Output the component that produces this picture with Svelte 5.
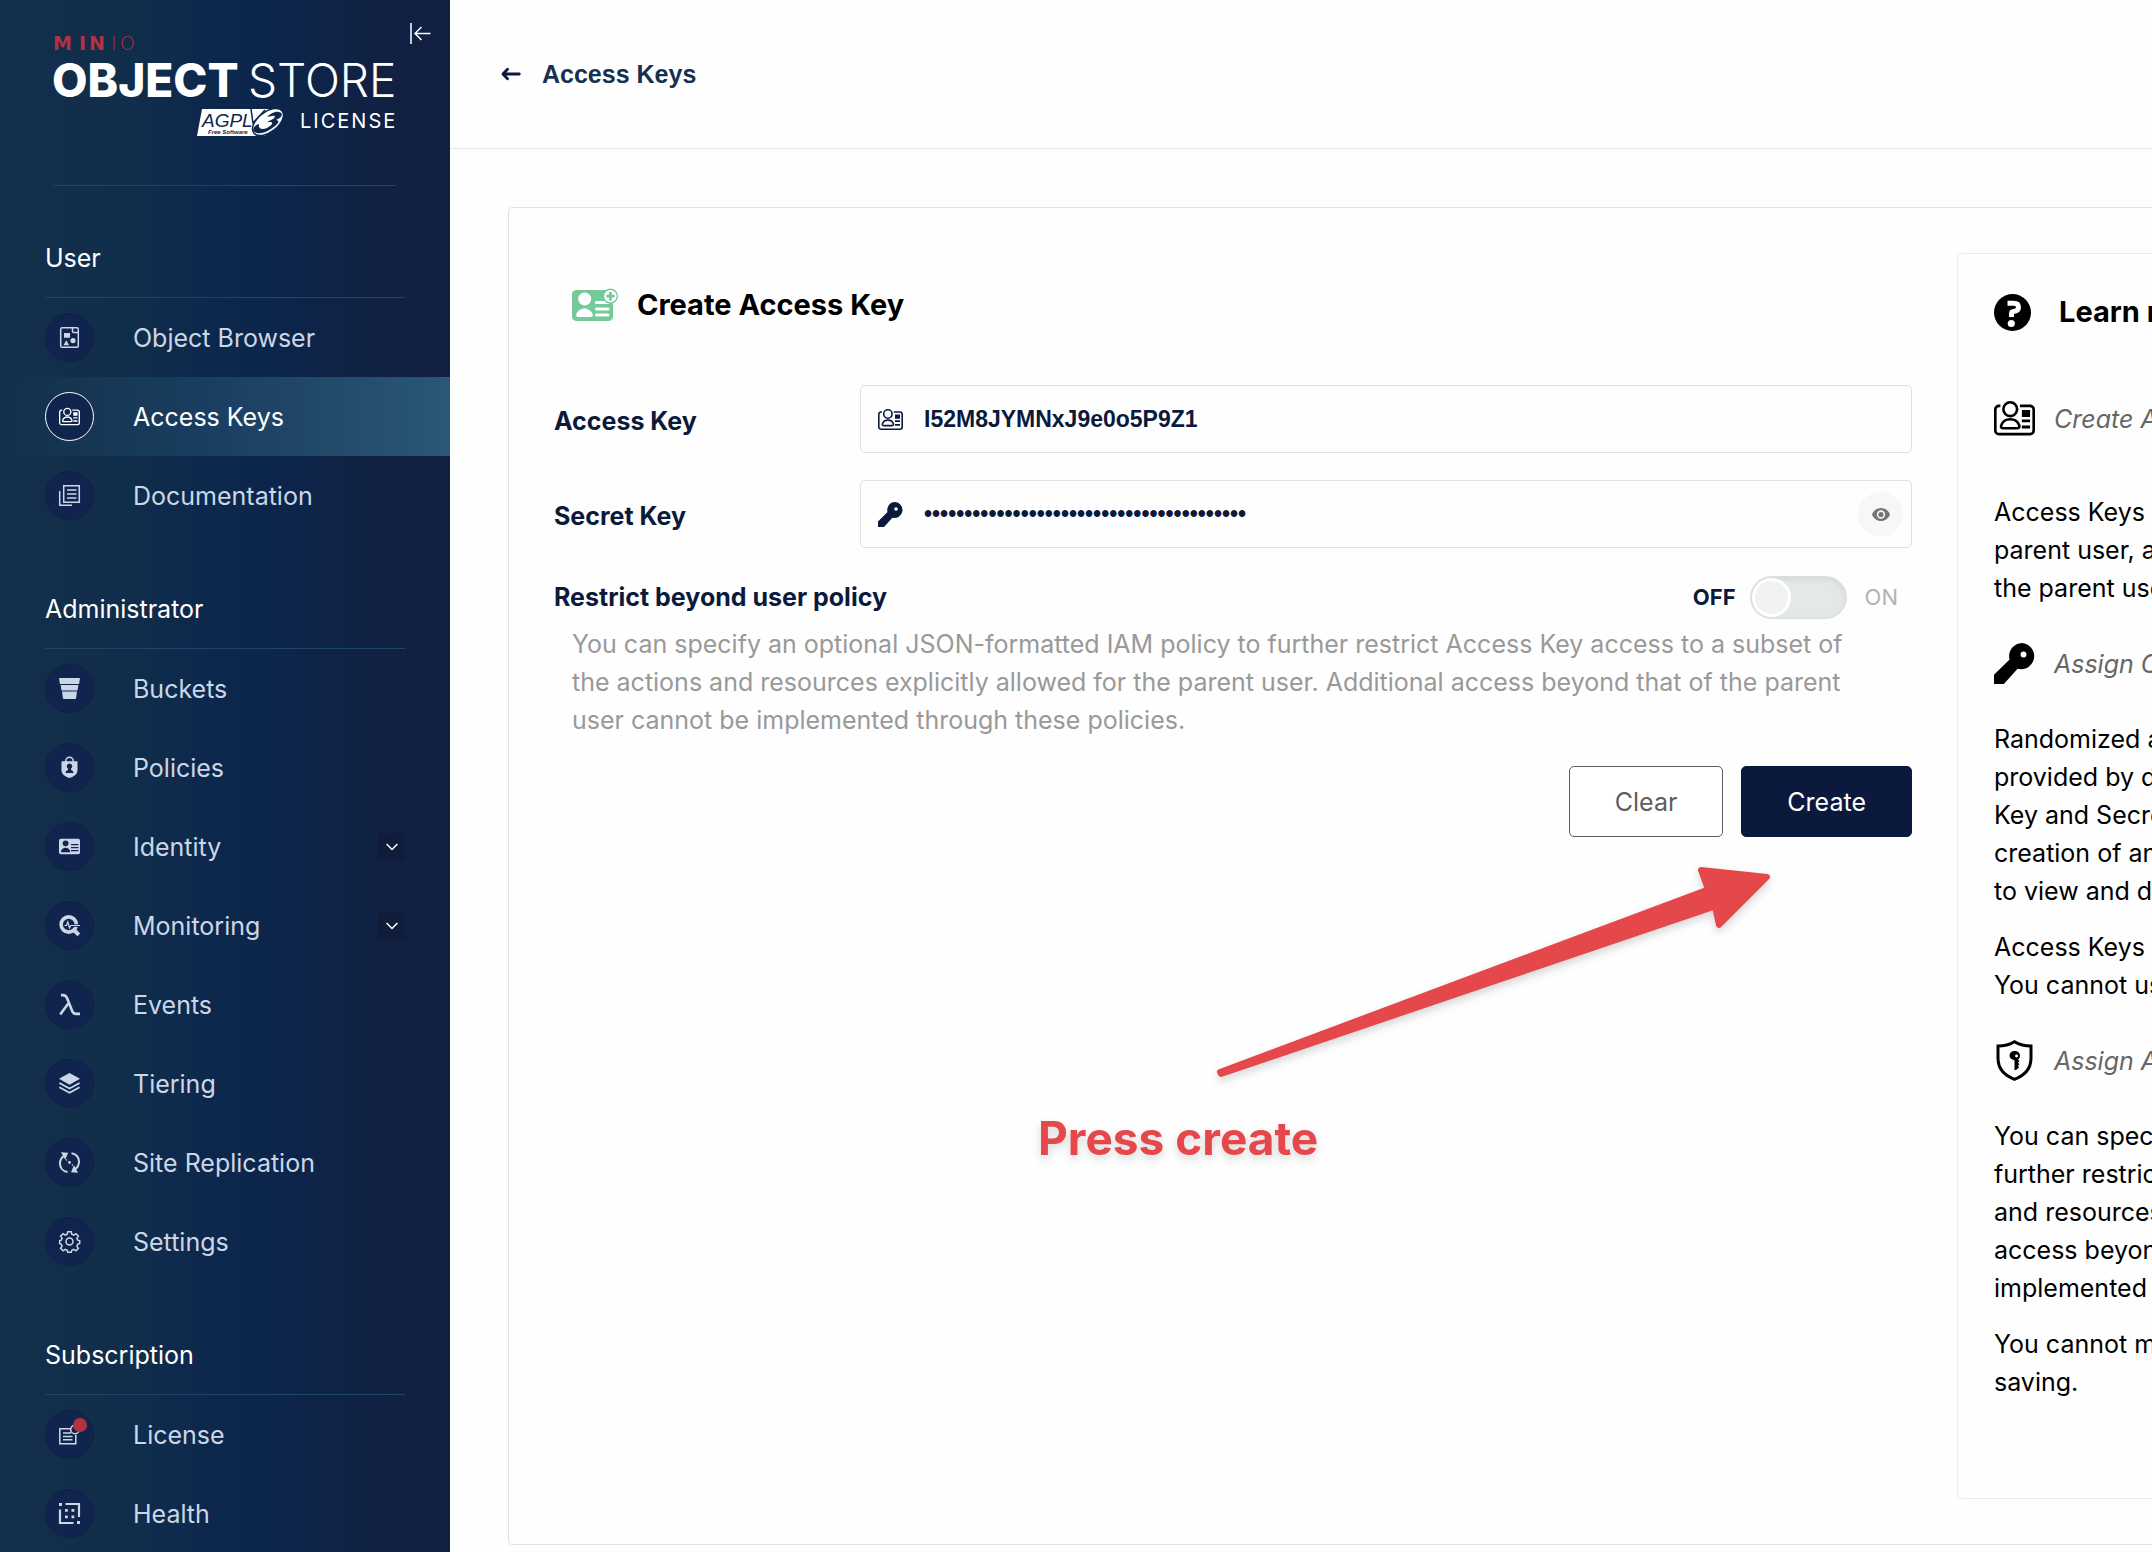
<script>
  let accessKey = $state('I52M8JYMNxJ9e0o5P9Z1');
  let secretKey = $state('q7Rk2ZpLw9XcVb4NtYhG6sDf8JmKaE3uQi5oPx1T');
  let reveal = $state(false);
  let restrict = $state(false);

  const sections = [
    {
      title: 'User',
      items: [
        { label: 'Object Browser', icon: 'browser' },
        { label: 'Access Keys', icon: 'card', active: true },
        { label: 'Documentation', icon: 'docs' }
      ]
    },
    {
      title: 'Administrator',
      items: [
        { label: 'Buckets', icon: 'bucket' },
        { label: 'Policies', icon: 'policy' },
        { label: 'Identity', icon: 'identity', expandable: true },
        { label: 'Monitoring', icon: 'monitor', expandable: true },
        { label: 'Events', icon: 'lambda' },
        { label: 'Tiering', icon: 'tiers' },
        { label: 'Site Replication', icon: 'replication' },
        { label: 'Settings', icon: 'gear' }
      ]
    },
    {
      title: 'Subscription',
      items: [
        { label: 'License', icon: 'license', badge: true },
        { label: 'Health', icon: 'health' }
      ]
    }
  ];

  const help = [
    {
      icon: 'card',
      title: 'Create Access Keys',
      first: true,
      paragraphs: [
        'Access Keys inherit the policies explicitly attached to the\nparent user, and all policies attached to each group in which\nthe parent user has membership.'
      ]
    },
    {
      icon: 'key',
      title: 'Assign Custom Credentials',
      paragraphs: [
        'Randomized access credentials are recommended, and\nprovided by default. You may use your own custom Access\nKey and Secret Key by replacing the default values. After\ncreation of any Access Key, you will be given the opportunity\nto view and download the account credentials.',
        'Access Keys support programmatic access by applications.\nYou cannot use a Access Key to log into the MinIO Console.'
      ]
    },
    {
      icon: 'shield',
      title: 'Assign Access Policies',
      paragraphs: [
        'You can specify an optional JSON-formatted IAM policy to\nfurther restrict Access Key access to a subset of the actions\nand resources explicitly allowed for the parent user. Additional\naccess beyond that of the parent user cannot be\nimplemented through these policies.',
        'You cannot modify the optional Access Key IAM policy after\nsaving.'
      ]
    }
  ];
</script>

{#snippet cardIcon(cls)}
  <svg class={cls} viewBox="0 0 25 21" fill="none" stroke="currentColor" stroke-width="1.6" aria-hidden="true">
    <path d="M3.9 3H3a2.2 2.2 0 0 0-2.2 2.2V18A2.2 2.2 0 0 0 3 20.2h19a2.2 2.2 0 0 0 2.2-2.2V5.2A2.2 2.2 0 0 0 22 3h-6.2" />
    <circle cx="9.9" cy="5" r="4.200" />
    <path d="M5.6 16.6c-1 0-1.600-.7-1.200-1.700.8-2.400 2.800-3.800 5.500-3.800s4.700 1.400 5.500 3.800c.3 1-.2 1.700-1.200 1.700z" />
    <path fill="currentColor" stroke="none" d="M17 5.500h5v4.200h-5zM17 11.300h5V13h-5zM17 15h5v1.700h-5z" />
  </svg>
{/snippet}

{#snippet keyIcon(cls)}
  <svg class={cls} viewBox="0 0 25 25" fill="currentColor" aria-hidden="true">
    <path fill-rule="evenodd" d="M17 0a8 8 0 1 1-2.600 15.700L6 25H0v-5.600l9.500-9.300A8 8 0 0 1 17 0zm1 5.200a1.800 1.800 0 1 0 0 3.600 1.800 1.800 0 0 0 0-3.600z" />
  </svg>
{/snippet}

{#snippet navIcon(name)}
  {#if name === 'card'}
    {@render cardIcon('glyph')}
  {:else}
    <svg class="glyph" viewBox="0 0 21 21" fill="none" stroke="currentColor" stroke-width="1.5" aria-hidden="true">
      {#if name === 'browser'}
        <rect x="1.700" y=".7" width="17.600" height="19.600" rx="1.500" />
        <path d="M13.500.7v3.800a1 1 0 0 0 1 1h4.800" />
        <g fill="currentColor" stroke="none">
          <path d="M5 6h6v4.800H5zM4.500 18.200l2.800-5 2.800 5z" />
          <circle cx="14" cy="13.600" r="2.600" />
        </g>
      {:else if name === 'docs'}
        <path d="M4.700.7h15.600v16.600H4.700zM.7 6v14.300H13M8 5h9.500M8 9h9.500M8 13h9.500" />
      {:else if name === 'bucket'}
        <path fill="currentColor" stroke="none" d="M0 0h21l-.9 5.900H.9zM1.600 6.900h17.800l-.9 5.700h-16zM3 13.600h15l-.9 6.600a1 1 0 0 1-1 .8H4.900a1 1 0 0 1-1-.8z" />
      {:else if name === 'policy'}
        <path d="M6.800 5V4a3.700 3.700 0 0 1 7.400 0v1" />
        <path fill="currentColor" stroke="none" fill-rule="evenodd" d="M2.500 4.200h16v9c0 4-4 6.600-8 7.800-4-1.200-8-3.800-8-7.800zM10.500 6.500a2.800 2.800 0 0 0-1.500 5.100v1.400c-1.700.5-2.500 1.500-2.500 3h8c0-1.500-.8-2.500-2.500-3v-1.400a2.800 2.800 0 0 0-1.500-5.100z" />
      {:else if name === 'identity'}
        <rect x="0" y="2.700" width="21" height="15.600" rx="1.800" fill="currentColor" stroke="none" />
        <g fill="#11244d" stroke="none">
          <circle cx="6.600" cy="7.300" r="2.900" />
          <path d="M2 16.300c0-3 2-4.600 4.600-4.600s4.600 1.600 4.600 4.600z" />
          <path d="M12 8h7.500v1.200H12zM12 11h7.500v1.200H12zM12 14h7.500v1.200H12z" />
        </g>
      {:else if name === 'monitor'}
        <circle cx="9.700" cy="9.500" r="7.600" stroke-width="3.600" />
        <path d="M14.500 14.500l5.300 5.300" stroke-width="4" />
        <path d="M13 10.600h8" stroke="#11244d" stroke-width="2.600" />
        <path d="M5.500 10.500h2l1.300-3.500 1.700 6 1.300-2.500H21" stroke-width="1.200" />
      {:else if name === 'lambda'}
        <path d="M2 1.100h2.200c2 0 3 1 3.800 3l5.200 13c.8 2 1.800 2.800 3.800 2.800h4M10 8.500L1.200 20.500" stroke-width="2.600" />
      {:else if name === 'tiers'}
        <path fill="currentColor" stroke="none" d="M10.500 0L21 5.800l-10.500 6L0 5.800z" />
        <path d="M.4 10l10.100 5.500L20.600 10M.4 14.300l10.100 5.500 10.100-5.500" stroke-width="1.800" />
      {:else if name === 'replication'}
        <path d="M8.500 20C3.500 19.300 1 15.500 1 11.500 1 7.500 3.300 4.800 6 3.200M12.500 1.300c4.500.5 7.500 4 7.500 8.200 0 3.600-1.700 6.300-4.300 8" stroke-width="2" />
        <g fill="currentColor" stroke="none">
          <path d="M2 .2l7.200.6-3 7zM19 20.800l-7-.6 3-7z" />
          <circle cx="10.500" cy="10.500" r="1.400" />
          <circle cx="7.500" cy="8" r=".8" />
          <circle cx="13.500" cy="13" r=".8" />
        </g>
      {:else if name === 'gear'}
        <circle cx="10.500" cy="10.500" r="3.500" />
        <path d="M8.700.7h3.600l.5 2.600 1.900.8 2.200-1.500 2.500 2.500-1.500 2.200.8 1.900 2 .4v2.900l-2 .8-.8 1.900 1.500 2.200-2.500 2.500-2.200-1.500-1.900.8-.5 2.100H8.700l-.5-2.100-1.900-.8-2.200 1.500-2.500-2.500 1.500-2.200-.8-1.900-1.600-.8V9.600l1.600-.4.8-1.900-1.500-2.200 2.500-2.500 2.200 1.500 1.900-.8z" />
      {:else if name === 'license'}
        <path d="M12 4.700H.8v15h16v-9M4 9h8M4 12.400h9.500M4 15.800h9.500" />
        <circle cx="16" cy="5.500" r="4.300" />
      {:else if name === 'health'}
        <path d="M6.500 1h13.500v13M1 6.500V20h13.500" stroke-width="2.200" />
        <path fill="currentColor" stroke="none" d="M0 0h3v3H0zM18 18h3v3h-3zM6 6h2.800v2.800H6zM12.500 6h2.800v2.800h-2.800zM6 12.500h2.800v2.800H6zM12.500 12.500h2.800v2.800h-2.800z" />
      {/if}
    </svg>
  {/if}
{/snippet}

<div class="app">
  <aside class="sidebar">
    <div class="brand">
      <svg class="logo" viewBox="0 0 342 104" role="img" aria-label="MinIO Object Store, AGPL v3 license">
        <text class="minio heavy" x="-1 25 35" y="16">MIN</text>
        <text class="minio thin" x="57 66" y="16">IO</text>
        <text class="product heavy" x="-2" y="63">OBJECT</text>
        <text class="product thin" x="194" y="63">STORE</text>
        <path fill="#fff" d="M148 75h56l-2 20 10 7h-69z" />
        <path fill="#fff" d="M196 75h28l-6 5-20 17-3-12z" />
        <text class="agpl" x="148" y="93">AGPL</text>
        <text class="free" x="154" y="100">Free Software</text>
        <path d="M197 75l2 14 12-13" fill="none" stroke="#0d284c" stroke-width="1.500" />
        <ellipse cx="214" cy="88" rx="18" ry="10" transform="rotate(-38 214 88)" fill="#fff" stroke="#0d284c" stroke-width="1.500" />
        <path d="M199 96c2 5 11 4 18-1 7-5 10-8 5-9 6-2 8-7 3-8-4-1-9 2-12 5l5-1c3-1 4 1 1 3l-6 3 4 0c3 1 0 4-4 6-5 2-9 1-8-4-4 1-5 3-6 6z" fill="#0d284c" />
        <text class="license" x="246" y="94">LICENSE</text>
      </svg>
      <button class="collapse" aria-label="Collapse menu">
        <svg viewBox="0 0 21 21" fill="none" stroke="currentColor" stroke-width="1.500"><path d="M1 0v21M20.500 10.500H5M11.500 4l-6.500 6.500 6.500 6.500" /></svg>
      </button>
    </div>
    <nav>
      {#each sections as section}
        <h2>{section.title}</h2>
        <ul>
          {#each section.items as item}
            <li>
              <a href="#{item.icon}" class:active={item.active}>
                <span class="disc">
                  {@render navIcon(item.icon)}
                  {#if item.badge}<span class="badge"></span>{/if}
                </span>
                <span class="label">{item.label}</span>
                {#if item.expandable}
                  <span class="expand">
                    <svg viewBox="0 0 12 8" fill="none" stroke="currentColor" stroke-width="1.500" aria-hidden="true"><path d="M.6 1L6 6.500 11.400 1" /></svg>
                  </span>
                {/if}
              </a>
            </li>
          {/each}
        </ul>
      {/each}
    </nav>
  </aside>

  <main>
    <header>
      <a class="back" href="#access-keys">
        <svg viewBox="0 0 20 14" fill="none" stroke="#0b1a3c" stroke-width="2.800" stroke-linecap="round" stroke-linejoin="round" aria-hidden="true"><path d="M18.300 7H2.500M6.500 2.200L2 7l4.500 4.800" /></svg>
        Access Keys
      </a>
    </header>

    <div class="content">
      <div class="card">
        <form onsubmit={(e) => e.preventDefault()}>
          <h1>
            <svg class="add" viewBox="0 0 46 34" aria-hidden="true">
              <rect x="0" y="2" width="41" height="31" rx="4.500" fill="#76c999" />
              <g fill="#fff">
                <circle cx="12.700" cy="11" r="6.500" />
                <path d="M6 29c-1.500 0-2.200-1-1.700-2.500 1-3.500 4.500-6 8.200-6s7.200 2.500 8.200 6c.5 1.500-.2 2.500-1.700 2.500z" />
                <rect x="23" y="13" width="14.500" height="3" rx="1.500" />
                <rect x="23" y="19.500" width="14.500" height="3" rx="1.500" />
                <rect x="23" y="25.500" width="14.500" height="3" rx="1.500" />
              </g>
              <circle cx="38.400" cy="8.200" r="7.600" fill="#76c999" />
              <circle cx="38.400" cy="8.200" r="6.200" fill="#fff" />
              <path d="M38.400 4v8.400M34.200 8.200h8.400" stroke="#76c999" stroke-width="2.800" />
            </svg>
            Create Access Key
          </h1>

          <div class="field">
            <label for="access">Access Key</label>
            <div class="box">
              {@render cardIcon('lead')}
              <input id="access" type="text" bind:value={accessKey} />
            </div>
          </div>
          <div class="field">
            <label for="secret">Secret Key</label>
            <div class="box">
              {@render keyIcon('lead')}
              <input id="secret" type={reveal ? 'text' : 'password'} bind:value={secretKey} />
              <button type="button" class="eye" aria-label="Show secret key" onclick={() => (reveal = !reveal)}>
                <svg viewBox="0 0 18 13" aria-hidden="true">
                  <path fill="#757575" fill-rule="evenodd" d="M9 0c4 0 7.500 2.600 9 6.500C16.500 10.400 13 13 9 13S1.500 10.400 0 6.500C1.500 2.600 5 0 9 0zm0 2.300a4.200 4.200 0 1 0 0 8.400 4.200 4.200 0 0 0 0-8.400z" />
                  <circle cx="9" cy="6.500" r="2.600" fill="#757575" />
                </svg>
              </button>
            </div>
          </div>

          <div class="restrict">
            <label for="restrict">Restrict beyond user policy</label>
            <span class="state" class:on={!restrict}>OFF</span>
            <input id="restrict" type="checkbox" role="switch" bind:checked={restrict} />
            <span class="state" class:on={restrict}>ON</span>
          </div>
          <p class="hint">
            You can specify an optional JSON-formatted IAM policy to further restrict Access Key access to a subset of
            the actions and resources explicitly allowed for the parent user. Additional access beyond that of the parent
            user cannot be implemented through these policies.
          </p>

          <div class="actions">
            <button type="button">Clear</button>
            <button type="submit" class="primary">Create</button>
          </div>

          <div class="callout">
            <svg viewBox="0 0 560 216" aria-hidden="true">
              <path d="M4 207L492 24.500 485 5l66 7-48 48-4-18.500L5 209z" fill="#e5484b" stroke="#e5484b" stroke-width="6" stroke-linejoin="round" />
            </svg>
            <strong>Press create</strong>
          </div>
        </form>

        <aside class="help">
          <h2>
            <svg viewBox="0 0 37 37" aria-hidden="true">
              <circle cx="18.500" cy="18.500" r="18.500" />
              <path d="M13.500 9.300h6c3.200 0 5 1.500 5 3.900s-1.800 4-5 4.200c-1.400.1-2 .8-2 2.300v3.300" fill="none" stroke="#fff" stroke-width="5" />
              <circle cx="17.300" cy="29.500" r="3.600" fill="#fff" />
            </svg>
            Learn more about Access Keys
          </h2>
          {#each help as topic}
            <section class:first={topic.first}>
              <h3>
                {#if topic.icon === 'card'}
                  {@render cardIcon('mark')}
                {:else if topic.icon === 'key'}
                  {@render keyIcon('mark')}
                {:else}
                  <svg class="mark" viewBox="0 0 41 41" fill="none" stroke="currentColor" aria-hidden="true">
                    <path d="M20.500 1.800c5 3 10.500 4.300 16.500 4.300v12c0 10.500-6 17.400-16.500 21.200C10 35.500 4 28.600 4 18.100v-12c6 0 11.500-1.300 16.500-4.300z" stroke-width="3" />
                    <path fill="currentColor" stroke="none" fill-rule="evenodd" d="M20.500 11c3.300 0 5.500 2 5.500 4.700 0 1.700-.8 3-2 3.800l1.500 1.500-1.500 1.600 1.500 1.600-1.600 1.600 1.200 1.500-2.300 2.200-2.300.7v-10c-3-.6-5-2.200-5-4.500 0-2.800 2-4.700 5-4.700zm2 3.500a1.500 1.500 0 1 0 .1 0z" />
                  </svg>
                {/if}
                {topic.title}
              </h3>
              {#each topic.paragraphs as text}<p>{text}</p>{/each}
            </section>
          {/each}
        </aside>
      </div>
    </div>
  </main>
</div>

<style>
  :global(body) {
    margin: 0;
    background: #fefefe;
  }
  h1,
  h2,
  h3,
  p,
  ul {
    margin: 0;
    padding: 0;
  }
  .app {
    display: flex;
    height: 100vh;
    overflow: hidden;
    font-family: Inter, 'Liberation Sans', sans-serif;
    font-optical-sizing: none;
    font-size: 25px;
    line-height: 38px;
    color: #000;
  }
  svg {
    display: block;
    flex: none;
    overflow: visible;
  }
  button,
  input {
    font: inherit;
  }

  /* Sidebar */
  .sidebar {
    flex: none;
    width: 450px;
    overflow: hidden;
    background: linear-gradient(90deg, #132f4a 0%, #102d4b 30%, #0d284d 45%, #0c254b 62%, #0f2345 76%, #121f40 100%);
    color: #fff;
  }
  .brand {
    display: flex;
    align-items: flex-start;
    box-sizing: border-box;
    height: 186px;
    margin: 0 20px 0 54px;
    background: linear-gradient(#204468, #204468) left bottom / 342px 1px no-repeat;
  }
  .logo {
    width: 342px;
    height: 104px;
    margin-top: 34px;
  }
  .heavy {
    font-weight: 800;
  }
  .thin {
    font-weight: 300;
  }
  .minio {
    font-family: 'DejaVu Sans', sans-serif;
    font-size: 19px;
    fill: #b53041;
  }
  .product {
    font-size: 46px;
    fill: #fff;
  }
  .agpl {
    font-family: 'Liberation Sans', sans-serif;
    font-size: 19px;
    font-style: italic;
    fill: #0d284c;
  }
  .free {
    font-family: 'Liberation Sans', sans-serif;
    font-size: 6px;
    font-style: italic;
    font-weight: 700;
    fill: #0d284c;
  }
  .license {
    font-size: 20px;
    letter-spacing: 2px;
    fill: #fff;
  }
  .collapse {
    margin: 23px 0 0 14px;
    padding: 0;
    border: 0;
    background: none;
    color: #fff;
  }
  .collapse svg {
    width: 21px;
    height: 21px;
  }
  .sidebar h2 {
    margin: 0 45px;
    padding: 53px 0 20px;
    border-bottom: 1px solid #1d4469;
    font-size: 25px;
    font-weight: 400;
  }
  .sidebar ul {
    list-style: none;
    padding-bottom: 2px;
  }
  .sidebar a {
    display: flex;
    align-items: center;
    height: 79px;
    padding: 0 45px;
    color: #cbd7e6;
    text-decoration: none;
  }
  .sidebar a.active {
    background: linear-gradient(90deg, transparent, #295878);
    color: #fff;
  }
  .disc {
    position: relative;
    display: grid;
    place-items: center;
    box-sizing: border-box;
    width: 49px;
    height: 49px;
    border: 1px solid #0f2147;
    border-radius: 50%;
    background: #11244d;
  }
  .active .disc {
    border-color: #fff;
  }
  .glyph {
    width: 21px;
    height: 21px;
  }
  .badge {
    position: absolute;
    top: 7px;
    right: 6px;
    width: 14px;
    height: 14px;
    border-radius: 50%;
    background: #b53041;
  }
  .label {
    flex: 1;
    margin-left: 39px;
  }
  .expand {
    display: grid;
    place-items: center;
    width: 27px;
    height: 27px;
    border-radius: 3px;
    background: #0f1c3a;
    color: #fff;
  }
  .expand svg {
    width: 12px;
    height: 8px;
  }

  /* Page */
  main {
    flex: 1;
    min-width: 0;
    overflow: hidden;
  }
  header {
    display: flex;
    align-items: center;
    height: 148px;
    padding-left: 51px;
    border-bottom: 1px solid #e5e5e5;
  }
  .back {
    display: flex;
    align-items: center;
    gap: 21px;
    color: #16304f;
    font-family: 'Liberation Sans', sans-serif;
    font-weight: 700;
    text-decoration: none;
  }
  .back svg {
    width: 20px;
    height: 14px;
  }
  .content {
    padding: 58px;
  }
  .card {
    display: grid;
    grid-template-columns: minmax(0, 1358px) 860px;
    gap: 45px;
    width: max-content;
    padding: 45px;
    border: 1px solid #e1e1e1;
    border-radius: 4px;
  }
  form {
    position: relative;
    color: #0b1a3c;
  }
  h1 {
    display: flex;
    align-items: center;
    gap: 19px;
    height: 104px;
    padding-left: 18px;
    color: #000;
    font-size: 29px;
    font-weight: 700;
  }
  .add {
    width: 46px;
    height: 34px;
  }
  .field {
    display: flex;
    align-items: center;
    margin: 28px 0 27px;
  }
  .field + .field {
    margin-top: 0;
  }
  label {
    font-weight: 700;
  }
  .field label {
    width: 306px;
    padding-top: 4px;
  }
  .box {
    display: flex;
    flex: 1;
    align-items: center;
    box-sizing: border-box;
    height: 68px;
    padding: 0 8px 0 17px;
    border: 1px solid #e1e1e1;
    border-radius: 5px;
  }
  .lead {
    width: 25px;
  }
  .box input {
    flex: 1;
    min-width: 0;
    margin-left: 21px;
    padding: 0;
    border: 0;
    outline: 0;
    background: none;
    color: inherit;
    font-family: 'Liberation Sans', sans-serif;
    font-size: 23px;
    font-weight: 700;
  }
  .eye {
    display: grid;
    place-items: center;
    width: 45px;
    height: 45px;
    padding: 0;
    border: 0;
    border-radius: 50%;
    background: #f7f7f7;
  }
  .eye svg {
    width: 18px;
    height: 13px;
  }
  .restrict {
    display: flex;
    align-items: center;
    height: 44px;
    padding-right: 14px;
  }
  .restrict label {
    flex: 1;
  }
  .state {
    color: #b3b3b3;
    font-size: 22px;
  }
  .state.on {
    color: #0b1a3c;
    font-weight: 700;
  }
  .restrict input {
    appearance: none;
    box-sizing: border-box;
    width: 97px;
    height: 43px;
    margin: 0 18px 0 14px;
    padding: 1px;
    border: 1px solid #dbdfdf;
    border-radius: 22px;
    background: #e4e8e9;
    box-shadow: inset 0 2px 6px rgba(0, 0, 0, 0.08);
  }
  .restrict input::before {
    content: '';
    display: block;
    box-sizing: border-box;
    width: 39px;
    height: 39px;
    border: 3px solid #fff;
    border-radius: 50%;
    background: #f1f3f3;
  }
  .restrict input:checked::before {
    margin-left: auto;
  }
  .hint {
    padding: 6px 45px 0 18px;
    color: #999;
  }
  .actions {
    display: flex;
    justify-content: flex-end;
    gap: 18px;
    padding-top: 27px;
  }
  .actions button {
    height: 71px;
    padding: 0 45px;
    border: 1px solid #5e5e5e;
    border-radius: 5px;
    background: #fff;
    color: #5e5e5e;
  }
  .actions .primary {
    border-color: #0b1a3c;
    background: #0b1a3c;
    color: #fff;
  }
  .callout {
    position: absolute;
    top: 612px;
    left: 484px;
    color: #e5484b;
    filter: drop-shadow(0 4px 4px rgba(0, 0, 0, 0.16));
  }
  .callout svg {
    width: 560px;
    height: 216px;
    margin-left: 178px;
  }
  .callout strong {
    display: block;
    margin-top: 29px;
    font-size: 46px;
    line-height: 56px;
    font-weight: 700;
  }

  /* Help panel */
  .help {
    box-sizing: border-box;
    min-height: 1246px;
    padding: 36px;
    border: 1px solid #ebebeb;
    border-radius: 4px;
  }
  .help h2 {
    display: flex;
    align-items: center;
    gap: 28px;
    height: 44px;
    font-size: 29px;
    font-weight: 700;
  }
  .help h2 svg {
    width: 37px;
    height: 37px;
  }
  .help h3 {
    display: flex;
    align-items: center;
    gap: 19px;
    height: 41px;
    padding: 36px 0;
    color: #666;
    font-size: 25px;
    font-style: italic;
    font-weight: 400;
  }
  .help .first h3 {
    padding: 64px 0 54px;
  }
  .help p {
    white-space: pre;
  }
  .mark {
    width: 41px;
    color: #000;
  }
  .help p + p {
    margin-top: 18px;
  }
</style>
